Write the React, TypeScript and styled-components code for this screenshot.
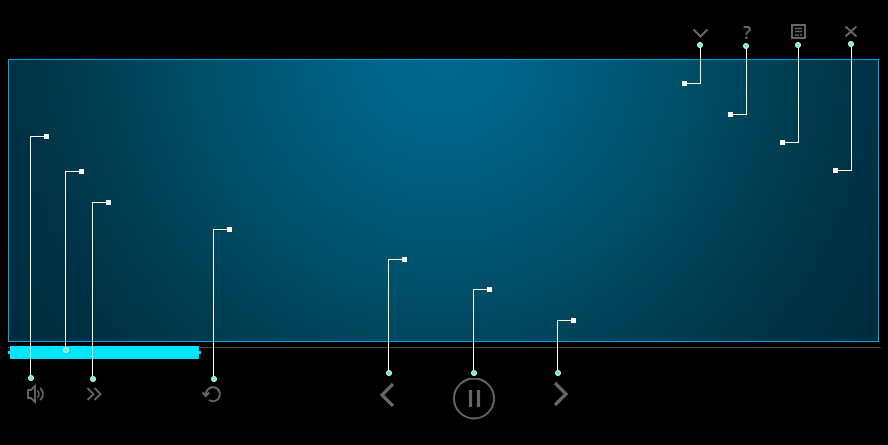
import React, { useState } from "react";
import styled, { createGlobalStyle, css } from "styled-components";

const ICON = "#666666";

const GlobalStyle = createGlobalStyle`
  *, *::before, *::after { box-sizing: border-box; }
  body {
    margin: 0;
    background: #000;
    font-family: "Open Sans", "Liberation Sans", sans-serif;
  }
`;

const Page = styled.div`
  display: flex;
  flex-direction: column;
  min-height: 100vh;
  background: #000;
`;

const Header = styled.header`
  display: flex;
  justify-content: flex-end;
  gap: 28px;
  padding: 20px 25px 15px;
`;

const Group = styled.div<{ $gap: number }>`
  display: flex;
  align-items: flex-start;
  gap: ${(p) => p.$gap}px;
`;

const Stage = styled.main`
  flex: 1;
  margin: 0 9px 0 8px;
  border: 1px solid #0aa2e0;
  background: radial-gradient(
    circle at 50% -4%,
    #00688f 0%,
    #006489 15%,
    #004f69 46%,
    #003d4f 68%,
    #003246 82%,
    #002c3c 100%
  );
`;

const IconButton = styled.button<{ $size?: "small" | "tall" | "large" }>`
  position: relative;
  display: grid;
  place-items: center;
  width: ${(p) => (p.$size === "large" ? 42 : 24)}px;
  height: ${(p) => (p.$size === "large" ? 42 : p.$size === "tall" ? 32 : 24)}px;
  padding: 0;
  border: 0;
  background: none;
  color: ${ICON};
  font: 600 18px/22px "Open Sans", "Liberation Sans", sans-serif;
  cursor: pointer;

  svg {
    display: block;
    fill: none;
    stroke: currentColor;
  }
`;

const Seek = styled.div`
  position: relative;
  height: 13px;
  margin: 4px 7px 0 8px;

  &::before {
    content: "";
    display: block;
    height: 2px;
    border-bottom: 1px solid #4a4a4a;
  }
`;

const Fill = styled.div`
  position: absolute;
  top: 0;
  bottom: 0;
  left: 0;
  padding: 0 2px;
  background: linear-gradient(#00e5ff, #00e5ff) 0 5px / 100% 3px no-repeat;

  &::before {
    content: "";
    display: block;
    height: 100%;
    background: #00e5ff;
  }
`;

const SeekInput = styled.input`
  position: absolute;
  inset: 0;
  width: 100%;
  height: 100%;
  margin: 0;
  opacity: 0;
  cursor: pointer;
`;

const Footer = styled.footer`
  display: flex;
  align-items: flex-start;
  padding: 19px 13px 25px 24px;
`;

const Spacer = styled.div<{ $grow: number }>`
  flex: ${(p) => p.$grow} 1 0;
`;

/* A leader line: dot beside the control, stem, and a short arm that ends in a square. */
const Leader = styled.span<{ $up?: boolean; $x: number; $dot: number; $length: number }>`
  position: absolute;
  left: ${(p) => (p.$up ? p.$x : p.$x - 14)}px;
  top: ${(p) => (p.$up ? p.$dot - p.$length : p.$dot + 6)}px;
  width: 15px;
  height: ${(p) => p.$length}px;
  pointer-events: none;

  ${(p) =>
    p.$up
      ? css`
          border-left: 1px solid #fff;
          border-top: 1px solid #fff;
        `
      : css`
          border-right: 1px solid #fff;
          border-bottom: 1px solid #fff;
        `}

  &::before {
    content: "";
    position: absolute;
    ${(p) => (p.$up ? "left: -3px; bottom: -6px;" : "right: -3px; top: -6px;")}
    width: 6px;
    height: 6px;
    border: 1px solid #e6fff8;
    border-radius: 50%;
    background: #5ff0d0;
  }

  &::after {
    content: "";
    position: absolute;
    ${(p) => (p.$up ? "right: -4px; top: -3px;" : "left: -4px; bottom: -3px;")}
    width: 5px;
    height: 5px;
    background: #fff;
  }
`;

export default function App() {
  const [progress, setProgress] = useState(22.1);

  return (
    <>
      <GlobalStyle />
      <Page>
        <Header>
          <Group $gap={22}>
            <IconButton aria-label="Collapse">
              <svg width="24" height="24" strokeWidth="2">
                <path d="M4.5 9.5l7 7 7-7" />
              </svg>
              <Leader $x={11} $dot={22} $length={36} />
            </IconButton>
            <IconButton aria-label="Help">
              ?
              <Leader $x={11} $dot={23} $length={66} />
            </IconButton>
          </Group>
          <Group $gap={28}>
            <IconButton aria-label="Transcript">
              <svg width="24" height="24" strokeWidth="2">
                <path d="M5 5h13v13H5z" />
                <path d="M8 8.5h7M8 11.5h7M8 15h4M13 15h2" strokeWidth="1.4" />
              </svg>
              <Leader $x={11} $dot={22} $length={95} />
            </IconButton>
            <IconButton aria-label="Close">
              <svg width="24" height="24" strokeWidth="2">
                <path d="M6.5 6.5l11 10M17.5 6.5l-11 10" />
              </svg>
              <Leader $x={12} $dot={21} $length={124} />
            </IconButton>
          </Group>
        </Header>

        <Stage />

        <Seek>
          <Fill style={{ width: `${progress}%` }} />
          <SeekInput
            type="range"
            aria-label="Seek"
            min={0}
            max={100}
            step={0.1}
            value={progress}
            onChange={(e) => setProgress(Number(e.target.value))}
          />
          <Leader $up $x={57} $dot={1} $length={176} />
        </Seek>

        <Footer>
          <Group $gap={94}>
            <Group $gap={34}>
              <IconButton $size="tall" aria-label="Volume">
                <svg width="24" height="32" strokeWidth="1.8">
                  <path d="M4 12h3l4-4v16l-4-4H4z" />
                  <path d="M13.5 12.5c1.8 2 1.8 5 0 7M16.3 10c3.6 3.4 3.6 8.6 0 12" />
                </svg>
                <Leader $up $x={6} $dot={-3} $length={239} />
              </IconButton>
              <IconButton $size="tall" aria-label="Playback speed">
                <svg width="24" height="32" strokeWidth="1.8">
                  <path d="M5.5 10l6 6-6 6M12.5 10l6 6-6 6" />
                </svg>
                <Leader $up $x={10} $dot={-2} $length={174} />
              </IconButton>
            </Group>
            <IconButton $size="tall" aria-label="Replay">
              <svg width="24" height="32" strokeWidth="2">
                <path d="M6 17a7 7 0 1 1 3 5" />
                <path d="M2.5 14.5L5.8 18l3.4-3.5" />
              </svg>
              <Leader $up $x={13} $dot={-2} $length={147} />
            </IconButton>
          </Group>
          <Spacer $grow={1} />
          <Group $gap={54}>
            <IconButton $size="tall" aria-label="Previous">
              <svg width="24" height="32" strokeWidth="3.2">
                <path d="M18 6L7 17l11 11" />
              </svg>
              <Leader $up $x={13} $dot={-8} $length={111} />
            </IconButton>
            <IconButton $size="large" aria-label="Pause">
              <svg width="42" height="42">
                <circle cx="21" cy="20.5" r="20" strokeWidth="2" />
                <path d="M17.5 12v17M25.5 12v17" strokeWidth="3.2" />
              </svg>
              <Leader $up $x={20} $dot={-8} $length={81} />
            </IconButton>
            <IconButton $size="tall" aria-label="Next">
              <svg width="24" height="32" strokeWidth="3.2">
                <path d="M6 5l11 11L6 27" />
              </svg>
              <Leader $up $x={8} $dot={-8} $length={50} />
            </IconButton>
          </Group>
          <Spacer $grow={2} />
        </Footer>
      </Page>
    </>
  );
}
